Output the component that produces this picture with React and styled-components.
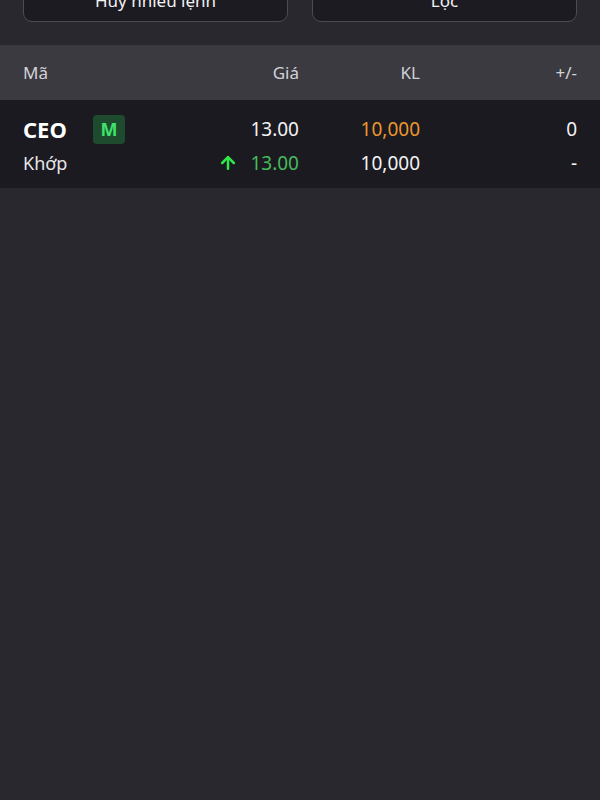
import React from 'react'
import styled, { createGlobalStyle } from 'styled-components'
import { ArrowUp } from 'lucide-react'

const GlobalStyle = createGlobalStyle`
  html, body {
    margin: 0;
    padding: 0;
    background: #28282e;
  }
  body {
    font-family: "Noto Sans", "Open Sans", sans-serif;
    color: #f2f2f4;
  }
`

const Screen = styled.div`
  min-height: 100vh;
  background: #28282e;
  overflow: hidden;
`

// the list is scrolled a little: the buttons sit partly above the top edge
const Toolbar = styled.div`
  display: grid;
  grid-template-columns: 1fr 1fr;
  gap: 24px;
  padding: 0 23px 23px;
  margin-top: -22px;
`

const ActionButton = styled.button`
  height: 44px;
  border-radius: 9px;
  border: 1px solid #4b4b51;
  background: #1c1b21;
  color: #f2f2f4;
  font-family: inherit;
  font-size: 17px;
`

const Columns = styled.div`
  display: grid;
  grid-template-columns: 156px 120px 121px 157px;
  align-items: center;
`

const HeaderRow = styled(Columns)`
  height: 55px;
  padding: 0 23px;
  background: #3a3a40;
  color: #d2d2d6;
  font-size: 17px;
`

const OrderRow = styled.div`
  display: grid;
  grid-template-rows: 30px 30px;
  row-gap: 4px;
  padding: 14px 23px 10px;
  background: #1b1a20;
`

const Cell = styled.div`
  color: ${p => p.$color || 'inherit'};
  font-size: ${p => p.$size || 19}px;
  display: flex;
  align-items: center;
  justify-content: ${p => (p.$right ? 'flex-end' : 'flex-start')};
  gap: 12px;
  white-space: nowrap;
`

const Symbol = styled.span`
  font-size: 22px;
  font-weight: 700;
  color: #ffffff;
  width: 58px;
`

const Badge = styled.span`
  width: 32px;
  height: 29px;
  border-radius: 4px;
  background: #1e4a2e;
  color: #3fe26c;
  font-weight: 700;
  font-size: 18px;
  display: flex;
  align-items: center;
  justify-content: center;
`

const UpArrow = styled(ArrowUp)`
  color: #2fe84a;
`

export default function App() {
  return (
    <Screen>
      <GlobalStyle />
      <Toolbar>
        <ActionButton>Hủy nhiều lệnh</ActionButton>
        <ActionButton>Lọc</ActionButton>
      </Toolbar>

      <HeaderRow>
        <Cell $size={17}>Mã</Cell>
        <Cell $size={17} $right>Giá</Cell>
        <Cell $size={17} $right>KL</Cell>
        <Cell $size={17} $right>+/-</Cell>
      </HeaderRow>

      <OrderRow>
        <Columns>
          <Cell>
            <Symbol>CEO</Symbol>
            <Badge>M</Badge>
          </Cell>
          <Cell $right>13.00</Cell>
          <Cell $right $color="#ea962f">10,000</Cell>
          <Cell $right>0</Cell>
        </Columns>
        <Columns>
          <Cell $size={18} $color="#e6e6ea">Khớp</Cell>
          <Cell $right $color="#45bb5c">
            <UpArrow size={20} strokeWidth={3} />
            13.00
          </Cell>
          <Cell $right>10,000</Cell>
          <Cell $right>-</Cell>
        </Columns>
      </OrderRow>
    </Screen>
  )
}
